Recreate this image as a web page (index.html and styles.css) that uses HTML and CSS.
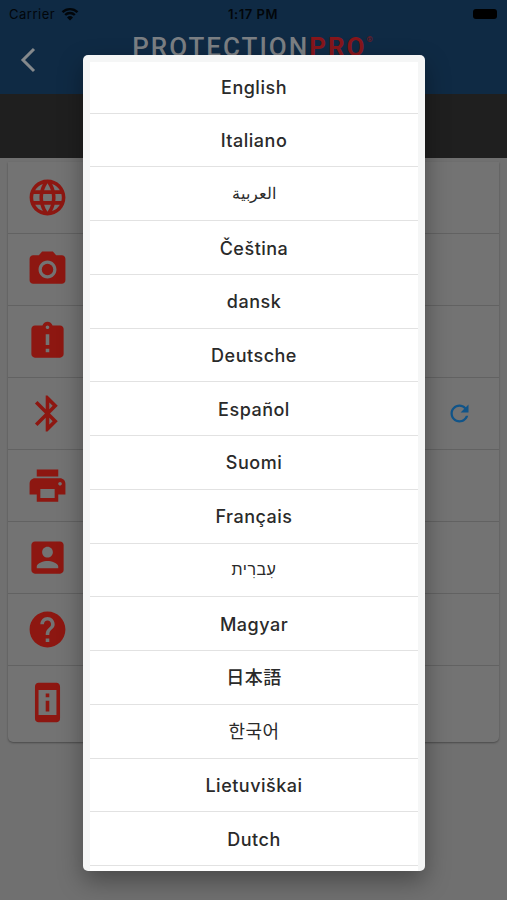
FILE: index.html
```html
<!DOCTYPE html>
<html lang="en">
<head>
<meta charset="utf-8">
<meta name="viewport" content="width=device-width, initial-scale=1">
<title>Language</title>
<link rel="stylesheet" href="styles.css">
</head>
<body>
<div class="page">
  <header class="header">
    <div class="status">
      <div class="carrier">Carrier
        <svg class="wifi" viewBox="0 0 18 14" aria-hidden="true"><path d="M1.5 5.2a10.6 10.6 0 0 1 15 0M4.2 8a6.8 6.8 0 0 1 9.6 0" fill="none" stroke="currentColor" stroke-width="2.4"/><path d="M9 13.4 6 10.4a4.3 4.3 0 0 1 6 0z" fill="currentColor"/></svg>
      </div>
      <div class="time">1:17 PM</div>
      <div class="power"><span class="battery"></span></div>
    </div>
    <div class="bar">
      <button class="back" type="button" aria-label="Back"><svg viewBox="0 0 16 26" aria-hidden="true"><path d="M14 2 3 13l11 11" fill="none" stroke="currentColor" stroke-width="3"/></svg></button>
      <div class="logo">PROTECTION<span class="pro">PRO</span><span class="mark">®</span></div>
    </div>
  </header>
  <div class="band"></div>
  <ul class="settings">
    <li><svg class="icon" viewBox="0 0 24 24" aria-hidden="true"><path d="M11.99 2C6.47 2 2 6.48 2 12s4.47 10 9.99 10C17.52 22 22 17.52 22 12S17.52 2 11.99 2zm6.93 6h-2.95c-.32-1.25-.78-2.45-1.38-3.56 1.84.63 3.37 1.91 4.33 3.56zM12 4.04c.83 1.2 1.48 2.53 1.91 3.96h-3.82c.43-1.43 1.08-2.76 1.91-3.96zM4.26 14C4.1 13.36 4 12.69 4 12s.1-1.36.26-2h3.38c-.08.66-.14 1.32-.14 2s.06 1.34.14 2H4.26zm.82 2h2.95c.32 1.25.78 2.45 1.38 3.56-1.84-.63-3.37-1.9-4.33-3.56zm2.95-8H5.08c.96-1.66 2.49-2.93 4.33-3.56C8.81 5.55 8.35 6.75 8.03 8zM12 19.96c-.83-1.2-1.48-2.53-1.91-3.96h3.82c-.43 1.43-1.08 2.76-1.91 3.96zM14.34 14H9.66c-.09-.66-.16-1.32-.16-2s.07-1.35.16-2h4.68c.09.65.16 1.32.16 2s-.07 1.34-.16 2zm.25 5.56c.6-1.11 1.06-2.31 1.38-3.56h2.95c-.96 1.65-2.49 2.93-4.33 3.56zM16.36 14c.08-.66.14-1.32.14-2s-.06-1.34-.14-2h3.38c.16.64.26 1.31.26 2s-.1 1.36-.26 2h-3.38z"/></svg></li>
    <li><svg class="icon" viewBox="0 0 24 24" aria-hidden="true"><circle cx="12" cy="12" r="3.2"/><path d="M9 2 7.17 4H4c-1.1 0-2 .9-2 2v12c0 1.1.9 2 2 2h16c1.1 0 2-.9 2-2V6c0-1.1-.9-2-2-2h-3.17L15 2H9zm3 15c-2.76 0-5-2.24-5-5s2.24-5 5-5 5 2.24 5 5-2.24 5-5 5z"/></svg></li>
    <li><svg class="icon" viewBox="0 0 24 24" aria-hidden="true"><path d="M19 3h-4.18C14.4 1.84 13.3 1 12 1s-2.4.84-2.82 2H5c-1.1 0-2 .9-2 2v14c0 1.1.9 2 2 2h14c1.1 0 2-.9 2-2V5c0-1.1-.9-2-2-2zm-6 15h-2v-2h2v2zm0-4h-2V8h2v6zm-1-9c-.55 0-1-.45-1-1s.45-1 1-1 1 .45 1 1-.45 1-1 1z"/></svg></li>
    <li><svg class="icon" viewBox="0 0 24 24" aria-hidden="true"><path d="M17.71 7.71 12 2h-1v7.59L6.41 5 5 6.41 10.59 12 5 17.59 6.41 19 11 14.41V22h1l5.71-5.71-4.3-4.29 4.3-4.29zM13 5.83l1.88 1.88L13 9.59V5.83zm1.88 10.46L13 18.17v-3.76l1.88 1.88z"/></svg>
      <button class="refresh" type="button" aria-label="Refresh"><svg viewBox="0 0 24 24" aria-hidden="true"><path d="M17.65 6.35C16.2 4.9 14.21 4 12 4c-4.42 0-7.99 3.58-7.99 8s3.57 8 7.99 8c3.73 0 6.84-2.55 7.73-6h-2.08c-.82 2.33-3.04 4-5.65 4-3.31 0-6-2.69-6-6s2.69-6 6-6c1.66 0 3.14.69 4.22 1.78L13 11h7V4l-2.35 2.35z"/></svg></button></li>
    <li><svg class="icon" viewBox="0 0 24 24" aria-hidden="true"><path d="M19 8H5c-1.66 0-3 1.34-3 3v6h4v4h12v-4h4v-6c0-1.66-1.34-3-3-3zm-3 11H8v-5h8v5zm3-7c-.55 0-1-.45-1-1s.45-1 1-1 1 .45 1 1-.45 1-1 1zm-1-9H6v4h12V3z"/></svg></li>
    <li><svg class="icon" viewBox="0 0 24 24" aria-hidden="true"><path d="M3 5v14c0 1.1.89 2 2 2h14c1.1 0 2-.9 2-2V5c0-1.1-.9-2-2-2H5c-1.11 0-2 .9-2 2zm12 4c0 1.66-1.34 3-3 3s-3-1.34-3-3 1.34-3 3-3 3 1.34 3 3zm-9 8c0-2 4-3.1 6-3.1s6 1.1 6 3.1v1H6v-1z"/></svg></li>
    <li><svg class="icon" viewBox="0 0 24 24" aria-hidden="true"><path d="M12 2C6.48 2 2 6.48 2 12s4.48 10 10 10 10-4.48 10-10S17.52 2 12 2zm1 17h-2v-2h2v2zm2.07-7.75-.9.92C13.45 12.9 13 13.5 13 15h-2v-.5c0-1.1.45-2.1 1.17-2.83l1.24-1.26c.37-.36.59-.86.59-1.41 0-1.1-.9-2-2-2s-2 .9-2 2H8c0-2.21 1.79-4 4-4s4 1.79 4 4c0 .88-.36 1.68-.93 2.25z"/></svg></li>
    <li><svg class="icon" viewBox="0 0 24 24" aria-hidden="true"><path d="M13 7h-2v2h2V7zm0 4h-2v6h2v-6zm4-9.990L7 1c-1.100 0-2 .9-2 2v18c0 1.100.9 2 2 2h10c1.100 0 2-.9 2-2V3c0-1.100-.9-1.990-2-1.990zM17 19H7V5h10v14z"/></svg></li>
  </ul>
</div>
<div class="overlay">
  <div class="dialog" role="dialog" aria-label="Language">
    <div class="list">
      <button type="button">English</button>
      <button type="button">Italiano</button>
      <button type="button" lang="ar" class="small">العربية</button>
      <button type="button" lang="cs">Čeština</button>
      <button type="button" lang="da">dansk</button>
      <button type="button" lang="de">Deutsche</button>
      <button type="button" lang="es">Español</button>
      <button type="button" lang="fi">Suomi</button>
      <button type="button" lang="fr">Français</button>
      <button type="button" lang="he" class="small">עִברִית</button>
      <button type="button" lang="hu">Magyar</button>
      <button type="button" lang="ja">日本語</button>
      <button type="button" lang="ko">한국어</button>
      <button type="button" lang="lt">Lietuviškai</button>
      <button type="button" lang="nl">Dutch</button>
      <div class="peek"></div>
    </div>
  </div>
</div>
</body>
</html>
```
FILE: styles.css
```css
* { box-sizing: border-box; }

body {
  margin: 0;
  min-height: 100vh;
  background: #707070;
  font-family: Inter, "Noto Sans", "Noto Sans CJK JP", sans-serif;
  overflow: hidden;
}

button {
  margin: 0;
  padding: 0;
  border: 0;
  background: none;
  font: inherit;
  color: inherit;
}

.header {
  height: 94px;
  background: #0f2a44;
  color: #02060a;
}

.status {
  display: grid;
  grid-template-columns: 1fr auto 1fr;
  align-items: center;
  height: 27px;
  padding: 0 10px 0 9px;
  font-size: 13px;
  letter-spacing: 0.5px;
}

.carrier { display: flex; align-items: center; gap: 6px; }
.wifi { width: 18px; height: 14px; }
.time { font-weight: 600; }
.power { display: flex; justify-content: flex-end; }
.battery { width: 24px; height: 10px; border-radius: 3px; background: #000; }

.bar {
  display: grid;
  grid-template-columns: 56px 1fr 56px;
  align-items: center;
  height: 66px;
}

.back { height: 48px; color: #85898c; }
.back svg { display: block; width: 16px; height: 26px; margin: 0 auto; }

.logo {
  display: flex;
  align-self: start;
  justify-content: center;
  color: #7b7f83;
  font: 500 26px/40px Roboto, "Liberation Sans", sans-serif;
  letter-spacing: 2px;
}
.pro { color: #86161b; font-weight: 700; }
.mark { color: #86161b; font-size: 8px; line-height: 26px; }

.band { height: 64px; background: #1f1f1f; }

.settings {
  list-style: none;
  margin: 4px 8px 0;
  padding: 0 0 4px;
  border-radius: 0 0 5px 5px;
  background: #737373;
  box-shadow: 0 1px 2px #4a4a4a;
}
.settings li {
  display: flex;
  align-items: center;
  justify-content: space-between;
  height: 72px;
  padding: 0 26px 0 18px;
  border-bottom: 1px solid #626262;
}
.settings li:last-child { border-bottom: 0; }
.icon { width: 43px; height: 43px; fill: #8d1711; }
.refresh svg { display: block; width: 27px; height: 27px; fill: #105489; }

.overlay {
  position: fixed;
  inset: 0;
  display: flex;
  padding: 55px 82px 29px 83px;
}
.dialog {
  flex: 1;
  padding: 5px 7px 0;
  border-radius: 5px;
  background: #f5f6f6;
  box-shadow: 0 10px 24px rgba(0, 0, 0, 0.35);
  overflow: hidden;
}
.list {
  display: grid;
  grid-template-rows: repeat(15, 1fr) 5px;
  height: 100%;
}
.list button {
  padding-top: 2px;
  background: #fff;
  border-bottom: 1px solid #e2e2e2;
  color: #2a2a2a;
  font-size: 18px;
  font-weight: 500;
  line-height: 24px;
  letter-spacing: 0.5px;
}
.list button:first-child { border-top: 2px solid #f5f6f6; }
.list .small { padding: 0 0 2px; font-size: 16px; font-weight: 400; }
.list [lang="ko"] { padding: 0 0 2px; font-family: "Noto Sans CJK KR", sans-serif; font-weight: 400; }
.list [lang="ja"] { padding: 0 0 2px; font-family: "Noto Sans CJK JP", sans-serif; }
.peek { background: #fff; }
```
